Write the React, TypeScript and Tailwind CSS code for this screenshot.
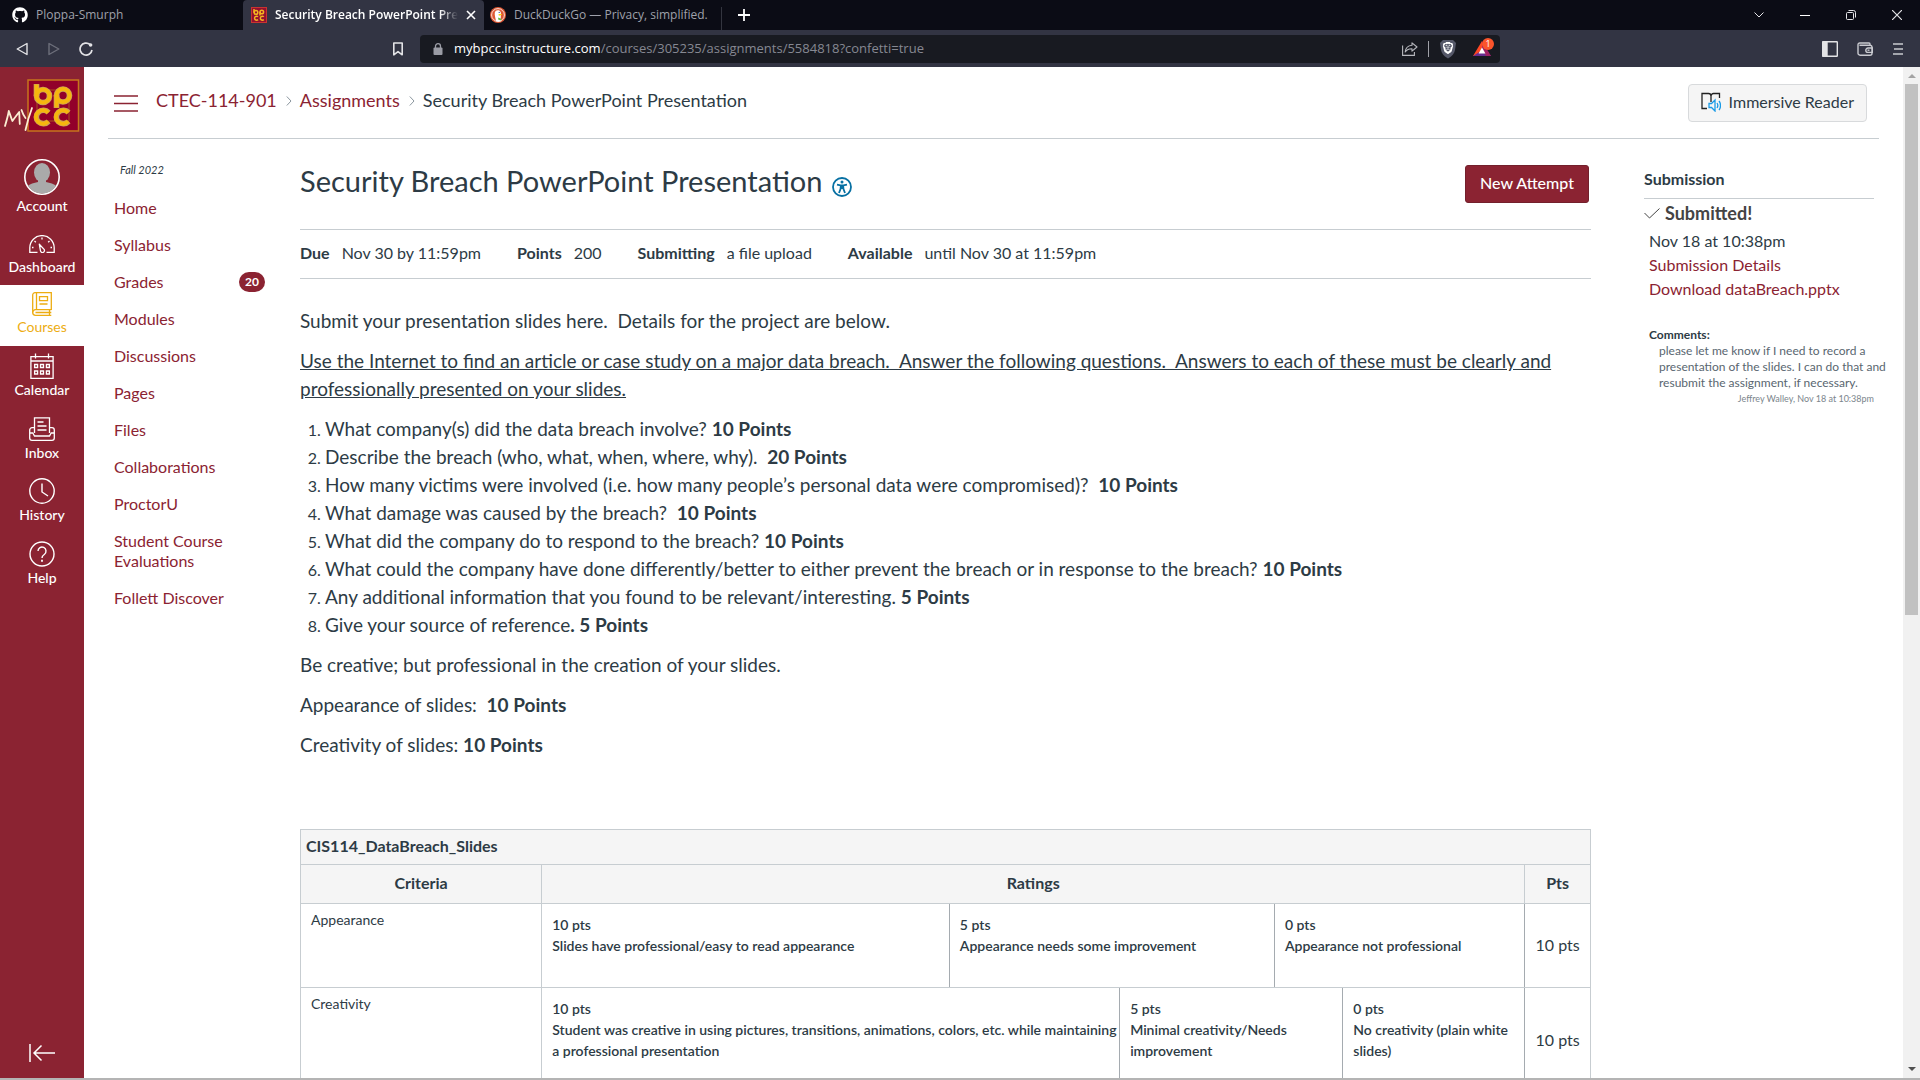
import React from "react";
import { FaGithub } from "react-icons/fa";
import { SiBrave } from "react-icons/si";

const courseLinks = [
  { label: "Home" },
  { label: "Syllabus" },
  { label: "Grades", badge: 20 },
  { label: "Modules" },
  { label: "Discussions" },
  { label: "Pages" },
  { label: "Files" },
  { label: "Collaborations" },
  { label: "ProctorU" },
  { label: "Student Course Evaluations" },
  { label: "Follett Discover" },
];

const questions = [
  { text: "What company(s) did the data breach involve? ", points: "10 Points" },
  { text: "Describe the breach (who, what, when, where, why).\u00a0 ", points: "20 Points" },
  {
    text: "How many victims were involved (i.e. how many people’s personal data were compromised)?\u00a0 ",
    points: "10 Points",
  },
  { text: "What damage was caused by the breach?\u00a0 ", points: "10 Points" },
  { text: "What did the company do to respond to the breach? ", points: "10 Points" },
  {
    text: "What could the company have done differently/better to either prevent the breach or in response to the breach? ",
    points: "10 Points",
  },
  { text: "Any additional information that you found to be relevant/interesting. ", points: "5 Points" },
  { text: "Give your source of reference", points: ". 5 Points" },
];

const details = [
  { name: "Due", value: "Nov 30 by 11:59pm" },
  { name: "Points", value: "200" },
  { name: "Submitting", value: "a file upload" },
  { name: "Available", value: "until Nov 30 at 11:59pm" },
];

const rubric = [
  {
    name: "Appearance",
    height: "h-[84px]",
    ratings: [
      { span: 1, pts: "10 pts", text: "Slides have professional/easy to read appearance" },
      { span: 2, pts: "5 pts", text: "Appearance needs some improvement" },
      { span: 2, pts: "0 pts", text: "Appearance not professional" },
    ],
    total: "10 pts",
  },
  {
    name: "Creativity",
    height: "h-[106px]",
    ratings: [
      {
        span: 2,
        pts: "10 pts",
        text: "Student was creative in using pictures, transitions, animations, colors, etc. while maintaining a professional presentation",
      },
      { span: 2, pts: "5 pts", text: "Minimal creativity/Needs improvement" },
      { span: 1, pts: "0 pts", text: "No creativity (plain white slides)" },
    ],
    total: "10 pts",
  },
];

function BpccMark({ className }: { className: string }) {
  return (
    <svg viewBox="0 0 16 16" className={className} aria-hidden="true">
      <rect x="0.5" y="0.5" width="15" height="15" fill="#93102f" stroke="#c8342f" />
      <g fill="none" stroke="#f3b61f" strokeWidth="1.5">
        <path d="M3 2v3.8" />
        <circle cx="5" cy="5.4" r="1.8" />
        <circle cx="10.8" cy="5" r="1.8" />
        <path d="M9 5v3.4" />
        <path d="M7 9.8a2 2 0 1 0 0 2.8" />
        <path d="M12.8 9.8a2 2 0 1 0 0 2.8" />
      </g>
    </svg>
  );
}

function DuckIcon() {
  return (
    <svg viewBox="0 0 16 16" className="size-4" aria-hidden="true">
      <circle cx="8" cy="8" r="8" fill="#de5833" />
      <circle cx="8" cy="8" r="6.4" fill="none" stroke="#fff" strokeWidth="0.8" />
      <path d="M6 14.2C5.500 11 4.400 8 4.800 5.600 5.200 3.400 7.600 2.600 9.300 3.600c1.500.8 1.800 2.400 1.600 4.200 0 2-.4 4.600.4 6.200-1.600.8-3.700.8-5.300.2z" fill="#fff" />
      <path d="M8.300 7.400c1.300-.5 2.900-.6 3.800-.2-.6.900-2.300 1-3.100 1.500z" fill="#fdd209" />
      <path d="M8.200 10.600l3.200 1.200-.6 1.600-2.600-.8z" fill="#65bc46" />
      <circle cx="9.200" cy="5.400" r="0.6" fill="#2d4f8e" />
    </svg>
  );
}

function BrowserTabs() {
  return (
    <div className="flex h-[30px] bg-[#0b0c15] text-xs text-[#9fa1ab]">
      <div className="flex w-[243px] items-center gap-2 pl-3">
        <FaGithub className="size-4 text-white" />
        <span>Ploppa-Smurph</span>
      </div>
      <div className="flex w-[241px] items-center gap-2 rounded-t bg-[#323443] pl-2 pr-2 font-semibold text-white">
        <BpccMark className="size-4 shrink-0" />
        <span className="flex-1 overflow-hidden whitespace-nowrap [mask-image:linear-gradient(to_right,black_90%,transparent)]">
          Security Breach PowerPoint Presentation
        </span>
        <button aria-label="Close tab">
          <svg viewBox="0 0 10 10" className="size-[10px]" stroke="currentColor" strokeWidth="1.6">
            <path d="M1 1l8 8M9 1l-8 8" />
          </svg>
        </button>
      </div>
      <div className="flex w-[237px] items-center gap-2 pl-[6px]">
        <DuckIcon />
        <span className="whitespace-nowrap">DuckDuckGo — Privacy, simplified.</span>
      </div>
      <div className="mt-[7px] w-px bg-[#33353f]" />
      <button aria-label="New tab" className="px-4 text-white">
        <svg viewBox="0 0 12 12" className="size-3" stroke="currentColor" strokeWidth="1.8">
          <path d="M6 0v12M0 6h12" />
        </svg>
      </button>
      <div className="ml-auto flex text-[#e5e5e8]">
        <button aria-label="Search tabs" className="flex w-[46px] items-center justify-center">
          <svg viewBox="0 0 10 6" className="h-[6px] w-[10px]" fill="none" stroke="currentColor">
            <path d="M.5.5L5 5 9.500.5" />
          </svg>
        </button>
        <button aria-label="Minimize" className="flex w-[46px] items-center justify-center">
          <span className="h-px w-[10px] bg-white" />
        </button>
        <button aria-label="Restore" className="flex w-[46px] items-center justify-center">
          <svg viewBox="0 0 10 10" className="size-[10px]" fill="none" stroke="currentColor">
            <rect x="0.5" y="2.5" width="7" height="7" rx="1" />
            <path d="M2.500 .5h5a2 2 0 0 1 2 2v5" />
          </svg>
        </button>
        <button aria-label="Close" className="flex w-[46px] items-center justify-center">
          <svg viewBox="0 0 10 10" className="size-[10px]" stroke="currentColor" strokeWidth="1.2">
            <path d="M0 0l10 10M10 0L0 10" />
          </svg>
        </button>
      </div>
    </div>
  );
}

function BrowserToolbar() {
  return (
    <div className="grid h-[37px] grid-cols-[420px_1fr_420px] items-center bg-[#323443] text-[#e3e3e6]">
      <div className="flex items-center pr-[16px] pl-4">
        <button aria-label="Back" className="w-[32px]">
          <svg viewBox="0 0 12 14" className="h-[14px] w-3" fill="none" stroke="currentColor" strokeWidth="1.4">
            <path d="M11 1.500v11L1.200 7z" strokeLinejoin="round" />
          </svg>
        </button>
        <button aria-label="Forward" className="w-[31px] text-[#6d6f7b]">
          <svg viewBox="0 0 12 14" className="h-[14px] w-3" fill="none" stroke="currentColor" strokeWidth="1.400">
            <path d="M1 1.500v11L10.800 7z" strokeLinejoin="round" />
          </svg>
        </button>
        <button aria-label="Reload">
          <svg viewBox="0 0 14 14" className="size-[14px]" fill="none" stroke="currentColor" strokeWidth="1.700">
            <path d="M11 2.500A6 6 0 1 0 13 8" />
            <circle cx="11.600" cy="3" r="1.800" fill="currentColor" stroke="none" />
          </svg>
        </button>
        <button aria-label="Bookmark this page" className="ml-auto">
          <svg viewBox="0 0 12 14" className="h-[14px] w-3" fill="none" stroke="currentColor" strokeWidth="1.600">
            <path d="M1.800 1h8.400v11.800L6 9.600l-4.200 3.200z" strokeLinejoin="round" />
          </svg>
        </button>
      </div>
      <div className="flex h-7 items-center rounded bg-[#181a21] pr-[7px] pl-[13px] text-[13px]">
        <svg viewBox="0 0 10 12" className="mr-[11px] h-3 w-[10px]" aria-hidden="true">
          <rect x="0.500" y="4.500" width="9" height="7.500" rx="1" fill="#9a9ca5" />
          <path d="M2.500 5V3.200a2.500 2.500 0 0 1 5 0V5" fill="none" stroke="#9a9ca5" strokeWidth="1.300" />
        </svg>
        <span className="flex-1">
          <span className="text-white">mybpcc.instructure.com</span>
          <span className="text-[#868892]">/courses/305235/assignments/5584818?confetti=true</span>
        </span>
        <button aria-label="Share" className="text-[#b7b8be]">
          <svg viewBox="0 0 16 14" className="h-[14px] w-4" fill="none" stroke="currentColor" strokeWidth="1.100">
            <path d="M.6 3.500v9.900h11.800V10" />
            <path d="M10 .8l5 4.200-5 4.200V6.800C6.800 6.700 4.800 7.800 3.200 10c.3-3.800 2.600-6.400 6.800-6.800z" strokeLinejoin="round" />
          </svg>
        </button>
        <span className="mx-[10px] h-4 w-px bg-[#a0a1a8]" />
        <button aria-label="Brave Shields" className="relative">
          <svg viewBox="0 0 18 20" className="h-5 w-[18px]">
            <path d="M4 1h10l1.500 1.500L17 4l-1 7c-.6 3.500-3 6.200-7 8.500C5 17.200 2.600 14.500 2 11L1 4l1.500-1.500z" fill="#555869" />
          </svg>
          <SiBrave className="absolute top-[3px] left-[3px] size-3 text-white" />
        </button>
        <button aria-label="Brave Rewards" className="relative ml-4">
          <svg viewBox="0 0 20 18" className="h-[18px] w-5">
            <path d="M9 1L0 16h6l3-7z" fill="#ff4724" />
            <path d="M0 16h18l-4-5H8z" fill="#662d91" />
            <path d="M9 1l9 15h-5L9 8z" fill="#9e1f63" />
            <path d="M9 7.500L5.600 13.500h6.800z" fill="#fff" />
          </svg>
          <span className="absolute -top-[2px] -right-[1px] flex size-3 items-center justify-center rounded-full bg-[#fb542b] text-[9px] leading-none text-white">
            1
          </span>
        </button>
      </div>
      <div className="flex items-center justify-end gap-[19px] pr-4">
        <button aria-label="Sidebar">
          <svg viewBox="0 0 16 16" className="size-4" fill="none" stroke="currentColor" strokeWidth="1.400">
            <rect x="0.700" y="0.700" width="14.600" height="14.600" rx="0.500" />
            <path d="M1 1h4v14H1z" fill="currentColor" />
          </svg>
        </button>
        <button aria-label="Wallet" className="text-[#c9cad0]">
          <svg viewBox="0 0 16 14" className="h-[14px] w-4" fill="none" stroke="currentColor" strokeWidth="1.400">
            <path d="M2.500 3.200H13a2 2 0 0 1 2 2v6a2 2 0 0 1-2 2H3a2 2 0 0 1-2-2V2.700A1.700 1.700 0 0 1 2.700 1H12a1 1 0 0 1 1 1v1" />
            <path d="M15.500 6H11a2.200 2.200 0 0 0 0 4.400h4.500z" />
            <path d="M10.500 8.200h2" />
          </svg>
        </button>
        <button aria-label="Menu" className="text-[#c9cad0]">
          <svg viewBox="0 0 12 14" className="h-[14px] w-3" stroke="currentColor" strokeWidth="1.600">
            <path d="M1 2h10M2 7h9M1 12h10" />
          </svg>
        </button>
      </div>
    </div>
  );
}

function BpccLogo() {
  return (
    <svg viewBox="0 0 76 54" className="h-[54px] w-[76px]" role="img" aria-label="My BPCC">
      <rect x="24" y="1" width="50.500" height="51" fill="#92002a" stroke="#c6761c" strokeWidth="1.500" />
      <rect x="33" y="11" width="32" height="31" fill="none" stroke="#a8521f" />
      <g fill="none" stroke="#c9a15a" strokeWidth="5.600">
        <path d="M32.500 5v12" />
        <circle cx="39" cy="17" r="6.500" />
        <circle cx="59" cy="16.500" r="6.500" />
        <path d="M52.500 16v13" />
        <path d="M44.500 33.500a7 6.700 0 1 0 0 9" />
        <path d="M64.500 33.500a7 6.700 0 1 0 0 9" />
      </g>
      <g fill="none" stroke="#f6b60e" strokeWidth="4">
        <path d="M32.500 5.500v12" />
        <circle cx="39" cy="17" r="6.500" />
        <circle cx="59" cy="16.500" r="6.500" />
        <path d="M52.500 16v12.500" />
        <path d="M44.300 33.700a7 6.700 0 1 0 0 8.600" />
        <path d="M64.300 33.700a7 6.700 0 1 0 0 8.600" />
      </g>
      <g fill="none" stroke="#fbeed2" strokeWidth="1.800" strokeLinecap="round" strokeLinejoin="round">
        <path d="M1 47C2.500 42 4 37 4.800 32c1.400 4 2.400 7 3.600 10 2.200-3 4.400-6 6.800-9 .3 4 .2 8 .6 12" />
        <path d="M17.500 31c1 3 2.300 6 4 8M28 29c-3 8-5 15-6.500 22" />
      </g>
    </svg>
  );
}

const icons = {
  dashboard: (
    <svg viewBox="0 0 26 18" className="h-[18px] w-[26px]" fill="none" stroke="currentColor" strokeWidth="1.300">
      <path d="M8.500 17.300H.8v-4.500a12.200 12.200 0 0 1 24.400 0v4.500h-7.700" />
      <path d="M10.300 9.200l4.800 5.200a2 2 0 1 1-3.600 1.500z" strokeLinejoin="round" />
      <path d="M13 2.500v2M5.500 6l1.300 1.300M20.500 6l-1.300 1.300M3 12.500h1.500M21.500 12.500H23" />
    </svg>
  ),
  courses: (
    <svg viewBox="0 0 20 24" className="h-6 w-5" fill="none" stroke="currentColor" strokeWidth="1.300">
      <path d="M19.300 18V.7H3A2.300 2.300 0 0 0 .7 3v17.500A2.800 2.800 0 0 0 3.500 23.300h15.800" />
      <path d="M19.300 17.600H3.500a2.800 2.800 0 0 0-2.800 2.800M3.500 20.500h15.800M4.500 1v16.500" />
      <path d="M7.500 4.700h8v4h-8zM7.500 12h8M17.500 18v5" />
    </svg>
  ),
  calendar: (
    <svg viewBox="0 0 24 26" className="h-[26px] w-6" fill="none" stroke="currentColor" strokeWidth="1.300">
      <path d="M.9 3.600h22.200v21.700H.9zM.9 8h22.200M5.500.5v5M18.500.5v5" />
      <path d="M4.600 11.500h3v3h-3zM10.500 11.500h3v3h-3zM16.400 11.500h3v3h-3zM4.600 18h3v3h-3zM10.500 18h3v3h-3zM16.400 18h3v3h-3z" />
    </svg>
  ),
  inbox: (
    <svg viewBox="0 0 26 24" className="h-6 w-[26px]" fill="none" stroke="currentColor" strokeWidth="1.300">
      <path d="M5.500 16V.8h15V16M8.500 5h6M8.500 9h9M8.500 13h9" />
      <path d="M5.500 10.700H3a2.300 2.300 0 0 0-2.300 2.300v8A2.300 2.300 0 0 0 3 23.300h20a2.300 2.300 0 0 0 2.300-2.300v-8a2.300 2.300 0 0 0-2.300-2.300h-2.500" />
      <path d="M.8 16h3l1.700 3h15l1.700-3h3" />
    </svg>
  ),
  history: (
    <svg viewBox="0 0 26 26" className="size-[26px]" fill="none" stroke="currentColor" strokeWidth="1.400">
      <circle cx="13" cy="13" r="12.200" />
      <path d="M13 5.500V14l6 4" />
    </svg>
  ),
  help: (
    <svg viewBox="0 0 26 26" className="size-[26px]" fill="none" stroke="currentColor" strokeWidth="1.400">
      <circle cx="13" cy="13" r="12" />
      <path d="M9 10a4 4 0 1 1 6.500 3.200C13.800 14.400 13 15 13 17" />
      <path d="M13 18.700v2" strokeWidth="1.800" />
    </svg>
  ),
};

function GlobalNav() {
  const item = "flex w-full flex-col items-center pt-[7px] text-sm leading-[22px]";
  return (
    <nav aria-label="Global" className="flex w-[84px] shrink-0 flex-col bg-[#8b2332] font-medium text-white">
      <a href="#" className="mt-3 mb-[26px] pl-1">
        <BpccLogo />
      </a>
      <a href="#" className={`${item} h-[66px] !pt-0`}>
        <svg viewBox="0 0 36 36" className="size-9" aria-hidden="true">
          <defs>
            <clipPath id="avatar">
              <circle cx="18" cy="18" r="16.500" />
            </clipPath>
          </defs>
          <circle cx="18" cy="18" r="17.200" fill="#8b2332" stroke="#fff" strokeWidth="1.600" />
          <g clipPath="url(#avatar)" fill="#aaa">
            <ellipse cx="18" cy="13.500" rx="8" ry="9.500" />
            <path d="M14 20h8v3c4 1 8 1.500 11 4.500V36H3v-8.500C6 24.500 10 24 14 23z" />
          </g>
        </svg>
        Account
      </a>
      <a href="#" className={`${item} h-[60px]`}>
        <span className="flex h-6 items-center">{icons.dashboard}</span>
        Dashboard
      </a>
      <a href="#" aria-current="page" className={`${item} h-[61px] bg-white font-normal text-[#edad12]`}>
        <span className="flex h-6 items-center">{icons.courses}</span>
        Courses
      </a>
      <a href="#" className={`${item} h-[63px]`}>
        {icons.calendar}
        Calendar
      </a>
      <a href="#" className={`${item} h-[62px]`}>
        <span className="flex h-[26px] items-center">{icons.inbox}</span>
        Inbox
      </a>
      <a href="#" className={`${item} h-[63px]`}>
        {icons.history}
        History
      </a>
      <a href="#" className={`${item} h-[63px]`}>
        {icons.help}
        Help
      </a>
      <button aria-label="Minimize global navigation" className="mt-auto mb-[15px] flex justify-center">
        <svg viewBox="0 0 26 20" className="h-5 w-[26px]" fill="none" stroke="currentColor" strokeWidth="1.500">
          <path d="M1 1v18M26 10H5M12.500 2.500L5 10l7.500 7.500" />
        </svg>
      </button>
    </nav>
  );
}

function Crumb() {
  return (
    <svg viewBox="0 0 6 10" className="mt-[2px] mr-2 ml-[9px] h-[10px] w-[6px] self-center" fill="none" stroke="#8b969e" aria-hidden="true">
      <path d="M.8.500L5 5 .8 9.500" />
    </svg>
  );
}

function PageHeader() {
  return (
    <header className="mr-6 ml-6 flex h-[72px] items-center border-b border-[#c7cdd1] pr-3 pl-[6px]">
      <button aria-label="Hide course navigation" className="mr-[18px] text-[#8b2332]">
        <svg viewBox="0 0 24 18" className="h-[18px] w-6" stroke="currentColor" strokeWidth="1.400">
          <path d="M0 2h24M0 9.500h24M0 17h24" />
        </svg>
      </button>
      <nav aria-label="Breadcrumbs" className="mb-[6px] flex text-lg leading-6 text-[#8b2332]">
        <a href="#">CTEC-114-901</a>
        <Crumb />
        <a href="#">Assignments</a>
        <Crumb />
        <span className="text-[#2d3b45]">Security Breach PowerPoint Presentation</span>
      </nav>
      <button className="ml-auto flex h-[38px] items-center gap-2 rounded border border-[#d8dadc] bg-[#f5f5f5] px-3 pb-[2px] text-base text-[#2d3b45]">
        <svg viewBox="0 0 20 20" className="size-5" fill="none" strokeWidth="1.300" aria-hidden="true">
          <path d="M6 16.500H1V1.500h6.500A2.500 2.500 0 0 1 10 4a2.500 2.500 0 0 1 2.500-2.500h6V6M10 4v6" stroke="#222" />
          <path d="M8 11.500h2.500L14 8v11l-3.500-3.500H8zM16 11c1 1.500 1 3.500 0 5M18 9c2 2.500 2 6.500 0 9" stroke="#1a9be6" />
        </svg>
        Immersive Reader
      </button>
    </header>
  );
}

function CourseNav() {
  return (
    <nav aria-label="Course" className="w-[192px] shrink-0 pr-[11px] pl-[30px] text-base leading-5 text-[#8b2332]">
      <p className="mt-[23px] mb-3 pl-[6px] text-[11px] leading-4 text-[#2d3b45] italic">Fall 2022</p>
      <ul className="flex flex-col gap-px">
        {courseLinks.map((link) => (
          <li key={link.label}>
            <a href="#" className="flex items-center justify-between py-2">
              <span className="max-w-[120px]">{link.label}</span>
              {link.badge && (
                <span className="rounded-full bg-[#8b2332] px-[6px] text-xs leading-5 font-bold text-white">
                  {link.badge}
                </span>
              )}
            </a>
          </li>
        ))}
      </ul>
    </nav>
  );
}

function Assignment() {
  return (
    <main className="ml-6 min-w-0 flex-1">
      <div className="flex items-start justify-between pt-[26px] pr-[2px]">
        <h1 className="flex items-center gap-[10px] text-[29px] leading-8">
          Security Breach PowerPoint Presentation
          <button aria-label="Accessibility score" className="mt-[11px]">
            <svg viewBox="0 0 20 20" className="size-5" fill="none" stroke="#0770a3" strokeWidth="1.800">
              <circle cx="10" cy="10" r="9" />
              <circle cx="10" cy="5" r="1.500" fill="#0770a3" stroke="none" />
              <path d="M5 7.600l3.500.8h3l3.500-.8M8.900 8.500L8.500 12 7 16M11.100 8.500l.4 3.500 1.500 4" />
              <path d="M8.500 8.500h3V12h-3z" fill="#0770a3" stroke="none" />
            </svg>
          </button>
        </h1>
        <button className="h-[38px] rounded-[3px] border border-[#73202c] bg-[#8b2332] px-[14px] pb-[2px] text-base font-medium text-white">
          New Attempt
        </button>
      </div>
      <dl className="mt-[26px] flex gap-9 border-y border-[#c7cdd1] pt-[11px] pb-[13px] text-base leading-6">
        {details.map((d) => (
          <div key={d.name} className="flex gap-3">
            <dt className="font-bold">{d.name}</dt>
            <dd>{d.value}</dd>
          </div>
        ))}
      </dl>
      <div className="mt-7 flex flex-col gap-3 text-[19px] leading-7">
        <p>Submit your presentation slides here.&nbsp; Details for the project are below.</p>
        <p className="underline">
          Use the Internet to find an article or case study on a major data breach.&nbsp; Answer the following
          questions.&nbsp; Answers to each of these must be clearly and professionally presented on your slides.
        </p>
        <ol className="list-decimal pl-[25px] marker:text-base">
          {questions.map((q) => (
            <li key={q.text}>
              {q.text}
              <strong>{q.points}</strong>
            </li>
          ))}
        </ol>
        <p>Be creative; but professional in the creation of your slides.</p>
        <p>
          Appearance of slides:&nbsp; <strong>10 Points</strong>
        </p>
        <p>
          Creativity of slides: <strong>10 Points</strong>
        </p>
      </div>
      <Rubric />
    </main>
  );
}

function Rubric() {
  return (
    <table className="mt-[70px] w-full table-fixed border-collapse border border-[#c7cdd1] text-sm">
      <colgroup>
        <col className="w-[18.7%]" />
        <col className="w-[31.6%]" />
        <col className="w-[13.2%]" />
        <col className="w-[12%]" />
        <col className="w-[5.3%]" />
        <col className="w-[14.1%]" />
        <col className="w-[5.1%]" />
      </colgroup>
      <thead className="bg-[#f5f5f5] text-base">
        <tr className="h-[35px]">
          <th colSpan={7} className="border border-[#c7cdd1] px-[5px] pb-[2px] text-left">
            CIS114_DataBreach_Slides
          </th>
        </tr>
        <tr className="h-[39px]">
          <th className="border border-[#c7cdd1] pb-[2px]">Criteria</th>
          <th colSpan={5} className="border border-[#c7cdd1] pb-[2px]">
            Ratings
          </th>
          <th className="border border-[#c7cdd1] pb-[2px]">Pts</th>
        </tr>
      </thead>
      <tbody>
        {rubric.map((row) => (
          <tr key={row.name} className={row.height}>
            <td className="border border-[#c7cdd1] px-[10px] pt-[6px] align-top leading-5">{row.name}</td>
            {row.ratings.map((r) => (
              <td
                key={r.pts}
                colSpan={r.span}
                className="border border-x-[#a5abb0] border-y-[#c7cdd1] pt-[10px] pl-[10px] align-top leading-[21px] font-semibold"
              >
                <div>{r.pts}</div>
                <div>{r.text}</div>
              </td>
            ))}
            <td className="border border-[#c7cdd1] pb-[2px] text-center text-base">{row.total}</td>
          </tr>
        ))}
      </tbody>
    </table>
  );
}

function SubmissionPanel() {
  return (
    <aside className="mr-[29px] ml-[53px] w-[230px] shrink-0 pt-7 text-base leading-6">
      <h2 className="border-b border-[#c7cdd1] pb-[7px] font-bold">Submission</h2>
      <div className="flex items-center gap-[5px] pt-[2px] text-lg leading-6 font-bold text-[#444]">
        <svg viewBox="0 0 16 11" className="h-[11px] w-4" fill="none" stroke="currentColor" aria-hidden="true">
          <path d="M.5 5l5 5L15.500.5" />
        </svg>
        Submitted!
      </div>
      <div className="mt-1 pl-[5px]">
        <p>Nov 18 at 10:38pm</p>
        <a href="#" className="block text-[#8b2332]">
          Submission Details
        </a>
        <a href="#" className="block text-[#8b2332]">
          Download dataBreach.pptx
        </a>
        <h3 className="mt-[26px] text-xs leading-4 font-bold">Comments:</h3>
        <p className="-mr-3 pl-[10px] text-xs leading-4 text-[#596670]">
          please let me know if I need to record a presentation of the slides. I can do that and resubmit the
          assignment, if necessary.
        </p>
        <p className="text-right text-[9px] leading-4 text-[#7b858c]">Jeffrey Walley, Nov 18 at 10:38pm</p>
      </div>
    </aside>
  );
}

function Scrollbar() {
  return (
    <div className="flex w-[17px] shrink-0 flex-col items-center bg-[#f1f1f1] py-[7px]" aria-hidden="true">
      <svg viewBox="0 0 8 4" className="h-1 w-2">
        <path d="M0 4l4-4 4 4z" fill="#a3a3a3" />
      </svg>
      <div className="mt-[6px] h-[53.3%] w-[13px] bg-[#c1c1c1]" />
      <svg viewBox="0 0 8 4" className="mt-auto h-1 w-2">
        <path d="M0 0l4 4 4-4z" fill="#505050" />
      </svg>
    </div>
  );
}

export default function App() {
  return (
    <div className="flex h-screen flex-col overflow-hidden border-b-2 border-[#b4b4b4] bg-white font-['Lato',sans-serif] text-[#2d3b45]">
      <div className="shrink-0 font-['Open_Sans','Noto_Sans',sans-serif]">
        <BrowserTabs />
        <BrowserToolbar />
      </div>
      <div className="flex min-h-0 flex-1">
        <GlobalNav />
        <div className="min-w-0 flex-1 overflow-hidden">
          <PageHeader />
          <div className="flex items-start">
            <CourseNav />
            <Assignment />
            <SubmissionPanel />
          </div>
        </div>
        <Scrollbar />
      </div>
    </div>
  );
}
